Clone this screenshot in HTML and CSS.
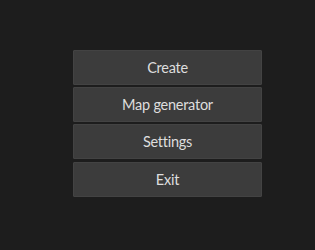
FILE: index.html
```html
<!DOCTYPE html>
<html>
<head>
  <meta charset="UTF-8">
  <link rel="stylesheet" href="styles.css">
</head>
<body>
  <div class="menu">
    <button class="menu-btn">Create</button>
    <button class="menu-btn">Map generator</button>
    <button class="menu-btn">Settings</button>
    <button class="menu-btn">Exit</button>
  </div>
</body>
</html>
```

FILE: styles.css
```css
html, body {
  width: 315px;
  height: 250px;
}

body {
  margin: 0;
  padding: 50px 0 0 73px;
  box-sizing: border-box;
  background: #1d1d1d;
  font-family: Lato, "Noto Sans", sans-serif;
  overflow: hidden;
}

.menu {
  width: 189px;
  display: flex;
  flex-direction: column;
  gap: 2px;
}

.menu-btn {
  height: 35px;
  margin: 0;
  padding: 0 0 1px;
  border: 1px solid #434343;
  border-radius: 1px;
  background: #3c3c3c;
  color: #dedede;
  font-family: inherit;
  font-size: 14.5px;
  letter-spacing: -0.25px;
  text-align: center;
  cursor: pointer;
}

/* the gaps in the reference are not even */
.menu-btn:nth-child(4) {
  margin-top: 1px;
}
```
